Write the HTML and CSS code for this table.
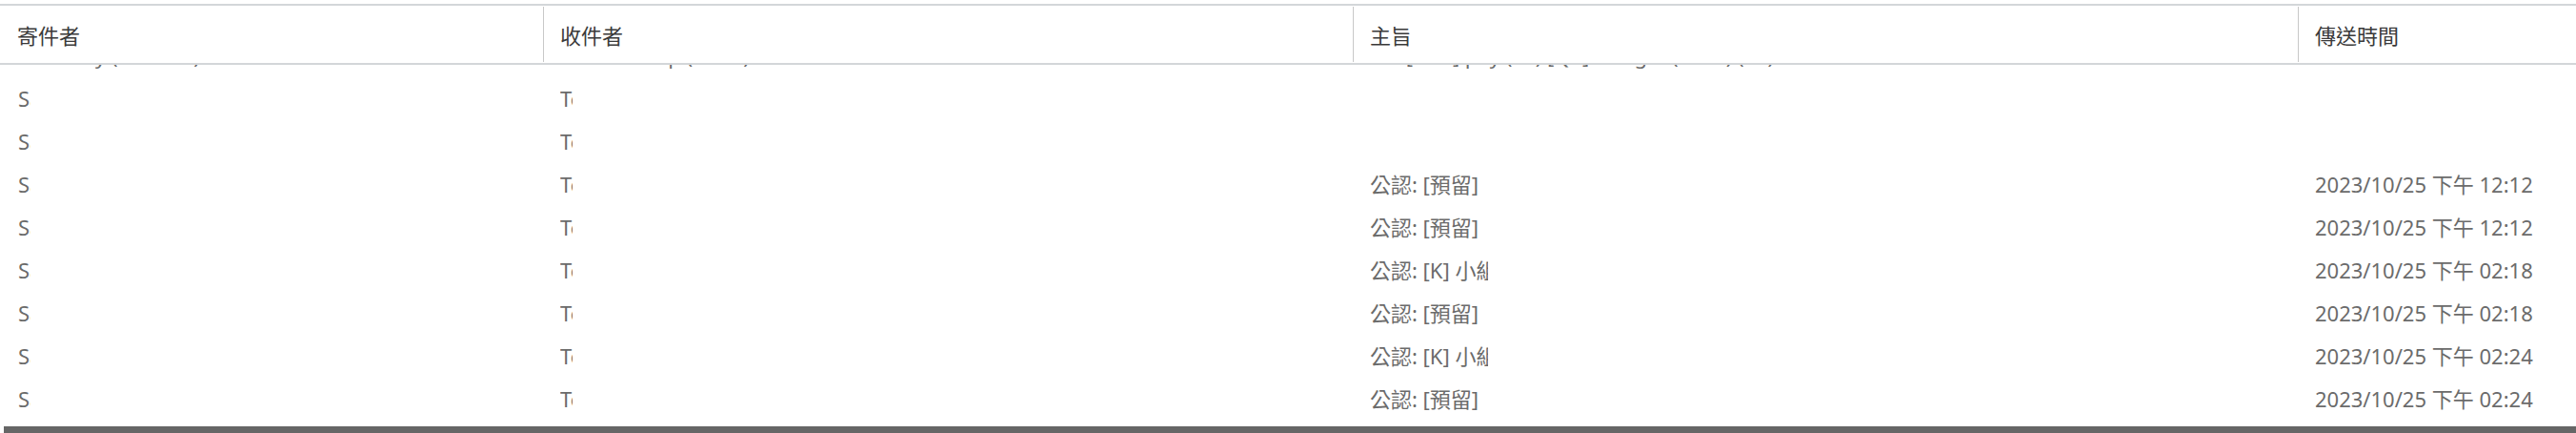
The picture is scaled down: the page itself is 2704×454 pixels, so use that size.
FILE: index.html
```html
<!DOCTYPE html>
<html lang="zh-Hant">
<head>
    <meta charset="UTF-8">
    <meta name="viewport" content="width=device-width, initial-scale=1.0">
    <title>郵件追蹤</title>
    <link rel="stylesheet" href="styles.css">
</head>
<body>

    <div class="mail-list">
        <div class="mail-head">
            <div class="cell">寄件者</div>
            <div class="cell">收件者</div>
            <div class="cell">主旨</div>
            <div class="cell">傳送時間</div>
        </div>

        <div class="mail-body">
            <div class="mail-rows">
                <!-- row scrolled up under the header -->
                <div class="mail-row">
                    <div class="cell">Sara Huy (Finance)</div>
                    <div class="cell">Team Group (Sales)</div>
                    <div class="cell">Re: [Info] pay (9F) [Q4] Budget (draft) (ok)</div>
                    <div class="cell">2023/10/25 am 11:48</div>
                </div>
                <div class="mail-row">
                    <div class="cell"><span class="clip clip-from">Sara</span></div>
                    <div class="cell"><span class="clip clip-to">Team</span></div>
                    <div class="cell"></div>
                    <div class="cell"></div>
                </div>
                <div class="mail-row">
                    <div class="cell"><span class="clip clip-from">Sara</span></div>
                    <div class="cell"><span class="clip clip-to">Team</span></div>
                    <div class="cell"></div>
                    <div class="cell"></div>
                </div>
                <div class="mail-row">
                    <div class="cell"><span class="clip clip-from">Sara</span></div>
                    <div class="cell"><span class="clip clip-to">Team</span></div>
                    <div class="cell"><span class="clip clip-subject">公認: [預留]</span></div>
                    <div class="cell">2023/10/25 下午 12:12</div>
                </div>
                <div class="mail-row">
                    <div class="cell"><span class="clip clip-from">Sara</span></div>
                    <div class="cell"><span class="clip clip-to">Team</span></div>
                    <div class="cell"><span class="clip clip-subject">公認: [預留]</span></div>
                    <div class="cell">2023/10/25 下午 12:12</div>
                </div>
                <div class="mail-row">
                    <div class="cell"><span class="clip clip-from">Sara</span></div>
                    <div class="cell"><span class="clip clip-to">Team</span></div>
                    <div class="cell"><span class="clip clip-subject">公認: [K] 小組會議</span></div>
                    <div class="cell">2023/10/25 下午 02:18</div>
                </div>
                <div class="mail-row">
                    <div class="cell"><span class="clip clip-from">Sara</span></div>
                    <div class="cell"><span class="clip clip-to">Team</span></div>
                    <div class="cell"><span class="clip clip-subject">公認: [預留]</span></div>
                    <div class="cell">2023/10/25 下午 02:18</div>
                </div>
                <div class="mail-row">
                    <div class="cell"><span class="clip clip-from">Sara</span></div>
                    <div class="cell"><span class="clip clip-to">Team</span></div>
                    <div class="cell"><span class="clip clip-subject">公認: [K] 小組會議</span></div>
                    <div class="cell">2023/10/25 下午 02:24</div>
                </div>
                <div class="mail-row">
                    <div class="cell"><span class="clip clip-from">Sara</span></div>
                    <div class="cell"><span class="clip clip-to">Team</span></div>
                    <div class="cell"><span class="clip clip-subject">公認: [預留]</span></div>
                    <div class="cell">2023/10/25 下午 02:24</div>
                </div>
            </div>
        </div>

        <div class="scrollbar">
            <div class="scroll-thumb"></div>
        </div>
    </div>

</body>
</html>
```

FILE: styles.css
```css
body {
    margin: 0;
    padding: 0;
    background-color: #fff;
    font-family: "Noto Sans", "Noto Sans CJK TC", sans-serif;
    font-size: 22px;
}
.mail-list {
    width: 2704px;
    height: 454px;
    overflow: hidden;
    display: flex;
    flex-direction: column;
}
.mail-head,
.mail-row {
    display: grid;
    grid-template-columns: 570px 850px 992px 1fr;
}
.mail-head {
    margin-top: 4px;
    height: 60px;
    border-top: 2px solid #d3d6d9;
    border-bottom: 2px solid #d3d6d9;
    color: #3a3a3a;
}
.mail-head .cell {
    display: flex;
    align-items: center;
    padding-left: 18px;
    margin: 1px 0;
}
.mail-head .cell + .cell {
    border-left: 1px solid #c8c8c8;
    padding-left: 17px;
}
.mail-body {
    height: 379px;
    overflow: hidden;
}
.mail-rows {
    margin-top: -32px;
}
.mail-row {
    height: 45px;
    line-height: 45px;
    color: #6b6b6b;
}
.mail-row .cell {
    padding-left: 19px;
    white-space: nowrap;
    overflow: hidden;
}
.mail-row .cell + .cell {
    padding-left: 18px;
}
.clip {
    display: inline-block;
    overflow: hidden;
    vertical-align: top;
    white-space: nowrap;
}
.clip-from {
    width: 13px;
}
.clip-to {
    width: 13px;
}
.clip-subject {
    width: 124px;
}
.scrollbar {
    margin-top: auto;
    height: 7px;
    padding-left: 4px;
}
.scroll-thumb {
    height: 100%;
    background-color: #666;
}
```
